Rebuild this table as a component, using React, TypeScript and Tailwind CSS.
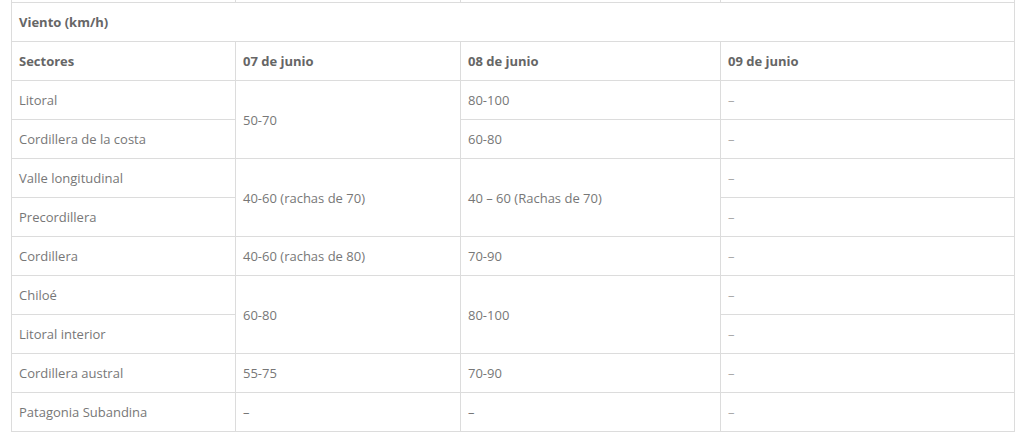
const rows = [
  { sector: "Litoral", d7: { text: "50-70", span: 2 }, d8: { text: "80-100", span: 1 }, d9: "–" },
  { sector: "Cordillera de la costa", d8: { text: "60-80", span: 1 }, d9: "–" },
  {
    sector: "Valle longitudinal",
    d7: { text: "40-60 (rachas de 70)", span: 2 },
    d8: { text: "40 – 60 (Rachas de 70)", span: 2 },
    d9: "–",
  },
  { sector: "Precordillera", d9: "–" },
  { sector: "Cordillera", d7: { text: "40-60 (rachas de 80)", span: 1 }, d8: { text: "70-90", span: 1 }, d9: "–" },
  { sector: "Chiloé", d7: { text: "60-80", span: 2 }, d8: { text: "80-100", span: 2 }, d9: "–" },
  { sector: "Litoral interior", d9: "–" },
  { sector: "Cordillera austral", d7: { text: "55-75", span: 1 }, d8: { text: "70-90", span: 1 }, d9: "–" },
  { sector: "Patagonia Subandina", d7: { text: "–", span: 1 }, d8: { text: "–", span: 1 }, d9: "–" },
]

const cell = "border border-[#dcdcdc] pl-[7px] pr-2 pt-[3px] pb-0 align-middle text-left"

export default function App() {
  return (
    <div
      className="w-[1024px] h-[445px] bg-white pl-[11px] overflow-hidden"
      style={{ fontFamily: '"Open Sans", "Noto Sans", sans-serif' }}
    >
      <table className="w-[1004px] border-collapse table-fixed text-[13px] text-[#777]">
        <colgroup>
          <col className="w-[224px]" />
          <col className="w-[225px]" />
          <col className="w-[260px]" />
          <col />
        </colgroup>
        <tbody>
          {/* tail of the table above */}
          <tr className="h-[2px]">
            <td className="border-x border-[#dcdcdc] p-0 h-[2px]"></td>
            <td className="border-x border-[#dcdcdc] p-0 h-[2px]"></td>
            <td className="border-x border-[#dcdcdc] p-0 h-[2px]"></td>
            <td className="border-x border-[#dcdcdc] p-0 h-[2px]"></td>
          </tr>
          <tr className="h-[39px]">
            <td colSpan={4} className={`${cell} font-bold text-[#666]`}>
              Viento (km/h)
            </td>
          </tr>
          <tr className="h-[39px]">
            <td className={`${cell} font-bold text-[#666]`}>Sectores</td>
            <td className={`${cell} font-bold text-[#666]`}>07 de junio</td>
            <td className={`${cell} font-bold text-[#666]`}>08 de junio</td>
            <td className={`${cell} font-bold text-[#666]`}>09 de junio</td>
          </tr>
          {rows.map((r, i) => (
            <tr key={i} className="h-[39px]">
              <td className={cell}>{r.sector}</td>
              {r.d7 && (
                <td rowSpan={r.d7.span} className={cell}>
                  {r.d7.text}
                </td>
              )}
              {r.d8 && (
                <td rowSpan={r.d8.span} className={cell}>
                  {r.d8.text}
                </td>
              )}
              <td className={`${cell} text-[#aaa]`}>{r.d9}</td>
            </tr>
          ))}
        </tbody>
      </table>
    </div>
  )
}
